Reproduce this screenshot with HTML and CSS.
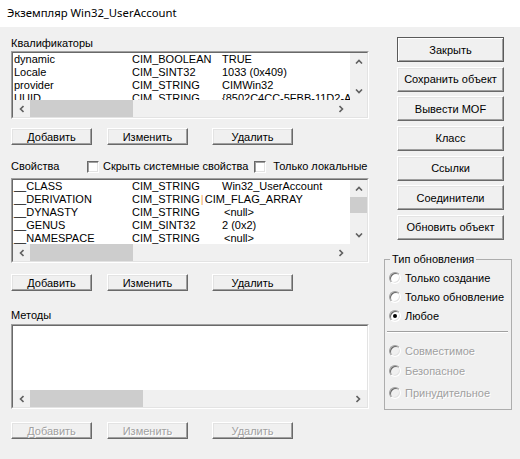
FILE: index.html
```html
<!DOCTYPE html>
<html>
<head>
<meta charset="utf-8">
<link rel="stylesheet" href="styles.css">
</head>
<body>
<div class="titlebar">Экземпляр Win32_UserAccount</div>
<div class="main">
  <div class="left">
    <div class="label">Квалификаторы</div>
    <div class="listbox">
      <div class="lb-inner lb-qual">
        <div class="content">
          <div class="row"><span class="c1">dynamic</span><span class="c2">CIM_BOOLEAN</span><span class="c3">TRUE</span></div>
          <div class="row"><span class="c1">Locale</span><span class="c2">CIM_SINT32</span><span class="c3">1033 (0x409)</span></div>
          <div class="row"><span class="c1">provider</span><span class="c2">CIM_STRING</span><span class="c3">CIMWin32</span></div>
          <div class="row"><span class="c1">UUID</span><span class="c2">CIM_STRING</span><span class="c3">{8502C4CC-5FBB-11D2-AAC1-006008C78BC7}</span></div>
        </div>
        <div class="vscroll">
          <div class="varr"><svg width="8" height="5" viewBox="0 0 8 5"><polyline points="1,4.5 4,1.5 7,4.5" fill="none" stroke="#606060" stroke-width="1.6"/></svg></div>
          <div class="vtrack"></div>
          <div class="varr"><svg width="8" height="5" viewBox="0 0 8 5"><polyline points="1,0.5 4,3.5 7,0.5" fill="none" stroke="#606060" stroke-width="1.6"/></svg></div>
        </div>
        <div class="hscroll">
          <div class="harr"><svg width="5" height="8" viewBox="0 0 5 8"><polyline points="4.5,1 1.5,4 4.5,7" fill="none" stroke="#606060" stroke-width="1.6"/></svg></div>
          <div class="htrack"><div class="hthumb"></div></div>
          <div class="harr"><svg width="5" height="8" viewBox="0 0 5 8"><polyline points="0.5,1 3.5,4 0.5,7" fill="none" stroke="#606060" stroke-width="1.6"/></svg></div>
        </div>
        <div class="corner"></div>
      </div>
    </div>
    <div class="btnrow row1">
      <div class="btn b1">Добавить</div>
      <div class="btn b2">Изменить</div>
      <div class="btn b3">Удалить</div>
    </div>

    <div class="proprow">
      <span class="plabel">Свойства</span>
      <span class="check"></span><span class="ctext">Скрыть системные свойства</span>
      <span class="check check2"></span><span class="ctext">Только локальные</span>
    </div>
    <div class="listbox lb-props">
      <div class="lb-inner lb-tall">
        <div class="content">
          <div class="row"><span class="c1">__CLASS</span><span class="c2">CIM_STRING</span><span class="c3">Win32_UserAccount</span></div>
          <div class="row"><span class="c1">__DERIVATION</span><span class="c2 wide">CIM_STRING<span class="pipe">|</span>CIM_FLAG_ARRAY</span></div>
          <div class="row"><span class="c1">__DYNASTY</span><span class="c2">CIM_STRING</span><span class="c3 nul">&lt;null&gt;</span></div>
          <div class="row"><span class="c1">__GENUS</span><span class="c2">CIM_SINT32</span><span class="c3">2 (0x2)</span></div>
          <div class="row"><span class="c1">__NAMESPACE</span><span class="c2">CIM_STRING</span><span class="c3 nul">&lt;null&gt;</span></div>
        </div>
        <div class="vscroll">
          <div class="varr"><svg width="8" height="5" viewBox="0 0 8 5"><polyline points="1,4.5 4,1.5 7,4.5" fill="none" stroke="#606060" stroke-width="1.6"/></svg></div>
          <div class="vtrack"><div class="vthumb"></div></div>
          <div class="varr"><svg width="8" height="5" viewBox="0 0 8 5"><polyline points="1,0.5 4,3.5 7,0.5" fill="none" stroke="#606060" stroke-width="1.6"/></svg></div>
        </div>
        <div class="hscroll">
          <div class="harr"><svg width="5" height="8" viewBox="0 0 5 8"><polyline points="4.5,1 1.5,4 4.5,7" fill="none" stroke="#606060" stroke-width="1.6"/></svg></div>
          <div class="htrack"><div class="hthumb"></div></div>
          <div class="harr"><svg width="5" height="8" viewBox="0 0 5 8"><polyline points="0.5,1 3.5,4 0.5,7" fill="none" stroke="#606060" stroke-width="1.6"/></svg></div>
        </div>
        <div class="corner"></div>
      </div>
    </div>
    <div class="btnrow row2">
      <div class="btn b1">Добавить</div>
      <div class="btn b2">Изменить</div>
      <div class="btn b3">Удалить</div>
    </div>

    <div class="label mlabel">Методы</div>
    <div class="listbox lb-methods">
      <div class="lb-inner lb-single">
        <div class="content"></div>
        <div class="hscroll">
          <div class="harr"><svg width="5" height="8" viewBox="0 0 5 8"><polyline points="4.5,1 1.5,4 4.5,7" fill="none" stroke="#606060" stroke-width="1.6"/></svg></div>
          <div class="htrack"><div class="hthumb hthumb-wide"></div></div>
          <div class="harr"><svg width="5" height="8" viewBox="0 0 5 8"><polyline points="0.5,1 3.5,4 0.5,7" fill="none" stroke="#606060" stroke-width="1.6"/></svg></div>
        </div>
      </div>
    </div>
    <div class="btnrow row3">
      <div class="btn b1 disabled">Добавить</div>
      <div class="btn b2 disabled">Изменить</div>
      <div class="btn b3 disabled">Удалить</div>
    </div>
  </div>

  <div class="right">
    <div class="rbtns">
      <div class="rbtn default">Закрыть</div>
      <div class="rbtn">Сохранить объект</div>
      <div class="rbtn">Вывести MOF</div>
      <div class="rbtn">Класс</div>
      <div class="rbtn">Ссылки</div>
      <div class="rbtn">Соединители</div>
      <div class="rbtn">Обновить объект</div>
    </div>
    <fieldset class="group">
      <legend>Тип обновления</legend>
      <div class="ropt r1"><span class="radio"></span><span>Только создание</span></div>
      <div class="ropt"><span class="radio"></span><span>Только обновление</span></div>
      <div class="ropt"><span class="radio"><span class="dot"></span></span><span>Любое</span></div>
      <div class="sep"></div>
      <div class="ropt dis r4"><span class="radio"></span><span>Совместимое</span></div>
      <div class="ropt dis r5"><span class="radio"></span><span>Безопасное</span></div>
      <div class="ropt dis r6"><span class="radio"></span><span>Принудительное</span></div>
    </fieldset>
  </div>
</div>
</body>
</html>
```

FILE: styles.css
```css
* { box-sizing: border-box; }
html, body {
  margin: 0;
  padding: 0;
}
body {
  width: 520px;
  height: 459px;
  overflow: hidden;
  background: #f0f0f0;
  font-family: "Liberation Sans", Arial, sans-serif;
  font-size: 11px;
  color: #000;
}
.titlebar {
  height: 27px;
  background: #fff;
  font-family: "Noto Sans", "Open Sans", sans-serif;
  font-size: 11.3px;
  line-height: 25px;
  padding-left: 7px;
}
.main {
  display: flex;
}
.left {
  width: 358px;
  margin-left: 11px;
  padding-top: 10px;
  display: flex;
  flex-direction: column;
}
.label {
  height: 13px;
  line-height: 13px;
  margin-bottom: 1px;
}
.mlabel {
  margin-top: 18px;
  margin-bottom: 2px;
}
.listbox {
  border: 1px solid;
  border-color: #a0a0a0 #ffffff #ffffff #a0a0a0;
}
.lb-inner {
  border: 1px solid;
  border-color: #696969 #e3e3e3 #e3e3e3 #696969;
  display: grid;
  grid-template-columns: 1fr 17px;
  grid-template-rows: 1fr 17px;
  background: #f0f0f0;
  height: 66px;
}
.lb-tall { height: 83px; }
.lb-single {
  height: 83px;
  grid-template-columns: 1fr;
}
.lb-props { margin-top: 5px; }
.content {
  background: #fff;
  overflow: hidden;
  padding-left: 1px;
}
.row {
  display: flex;
  height: 13px;
  line-height: 13px;
  white-space: nowrap;
}
.c1 { width: 118px; flex: none; }
.c2 { width: 90px; flex: none; }
.c2.wide { width: auto; }
.c3 { flex: none; }
.nul { padding-left: 2px; }
.pipe { color: #f0a050; margin: 0 1px; }
.vscroll {
  display: flex;
  flex-direction: column;
  background: #f0f0f0;
}
.varr {
  height: 17px;
  display: flex;
  align-items: center;
  justify-content: center;
  flex: none;
}
.vtrack { flex: 1; }
.vthumb {
  height: 16px;
  background: #cdcdcd;
}
.hscroll {
  display: flex;
  background: #f0f0f0;
}
.harr {
  width: 17px;
  display: flex;
  align-items: center;
  justify-content: center;
  flex: none;
}
.harr svg, .varr svg { display: block; }
.htrack { flex: 1; }
.hthumb {
  width: 103px;
  height: 100%;
  background: #cdcdcd;
}
.hthumb-wide { width: 113px; }
.corner { background: #f0f0f0; }

.btnrow {
  display: flex;
  height: 17px;
}
.row1 { margin-top: 9px; }
.row2 { margin-top: 11px; }
.row3 { margin-top: 13px; }
.btn, .rbtn {
  background: #f0f0f0;
  border: 1px solid;
  border-color: #ffffff #696969 #696969 #ffffff;
  box-shadow: inset -1px -1px #a0a0a0, inset 1px 1px #e3e3e3;
  display: flex;
  align-items: center;
  justify-content: center;
  white-space: nowrap;
}
.btn {
  width: 81px;
  height: 17px;
}
.b2 { margin-left: 15px; }
.b3 { margin-left: 24px; }
.disabled {
  color: #a0a0a0;
  text-shadow: 1px 1px 0 #ffffff;
}

.proprow {
  margin-top: 15px;
  height: 13px;
  line-height: 13px;
  display: flex;
  align-items: center;
}
.plabel { width: 76px; flex: none; }
.check {
  width: 12px;
  height: 12px;
  flex: none;
  background: #fff;
  border: 1px solid;
  border-color: #696969 #ffffff #ffffff #696969;
  box-shadow: inset 1px 1px #a0a0a0, inset -1px -1px #e3e3e3;
  margin-right: 4px;
}
.check2 { margin-left: 6px; margin-right: 7px; }
.ctext { white-space: nowrap; }

.right {
  width: 128px;
  margin-left: 15px;
  padding-top: 10px;
  display: flex;
  flex-direction: column;
}
.rbtns {
  display: flex;
  flex-direction: column;
  gap: 4.67px;
  padding-left: 13px;
}
.rbtn {
  width: 107px;
  height: 25px;
}
.rbtn.default {
  border-color: #5a5a5a;
  box-shadow: inset 1px 1px #ffffff, inset -1px -1px #a0a0a0;
}
.group {
  margin: 13px 0 0 0;
  padding: 3px 0 6px 0;
  border: 1px solid #adadad;
  min-width: 0;
  height: 157px;
}
.group legend {
  padding: 0 2px;
  margin-left: 5px;
  line-height: 13px;
  font-size: 11px;
}
.ropt {
  display: flex;
  align-items: center;
  height: 19px;
  padding-left: 4px;
  white-space: nowrap;
}
.radio {
  width: 12px;
  height: 12px;
  border-radius: 50%;
  background: #fff;
  border: 1px solid;
  border-color: #a0a0a0 #ffffff #ffffff #a0a0a0;
  box-shadow: inset 1px 1px #696969, inset -1px -1px #e3e3e3;
  display: flex;
  align-items: center;
  justify-content: center;
  margin-right: 4px;
  flex: none;
}
.dot {
  width: 4px;
  height: 4px;
  border-radius: 50%;
  background: #000;
}
.sep {
  margin: 5px 3px 0 2px;
  border-top: 1px solid #a0a0a0;
  border-bottom: 1px solid #ffffff;
}
.r4 { margin-top: 8px; height: 20px; }
.r5 { height: 20px; }
.r6 { margin-top: 2px; height: 20px; }
.dis { color: #a0a0a0; text-shadow: 1px 1px 0 #ffffff; }
.dis .radio { background: #f0f0f0; }
```
